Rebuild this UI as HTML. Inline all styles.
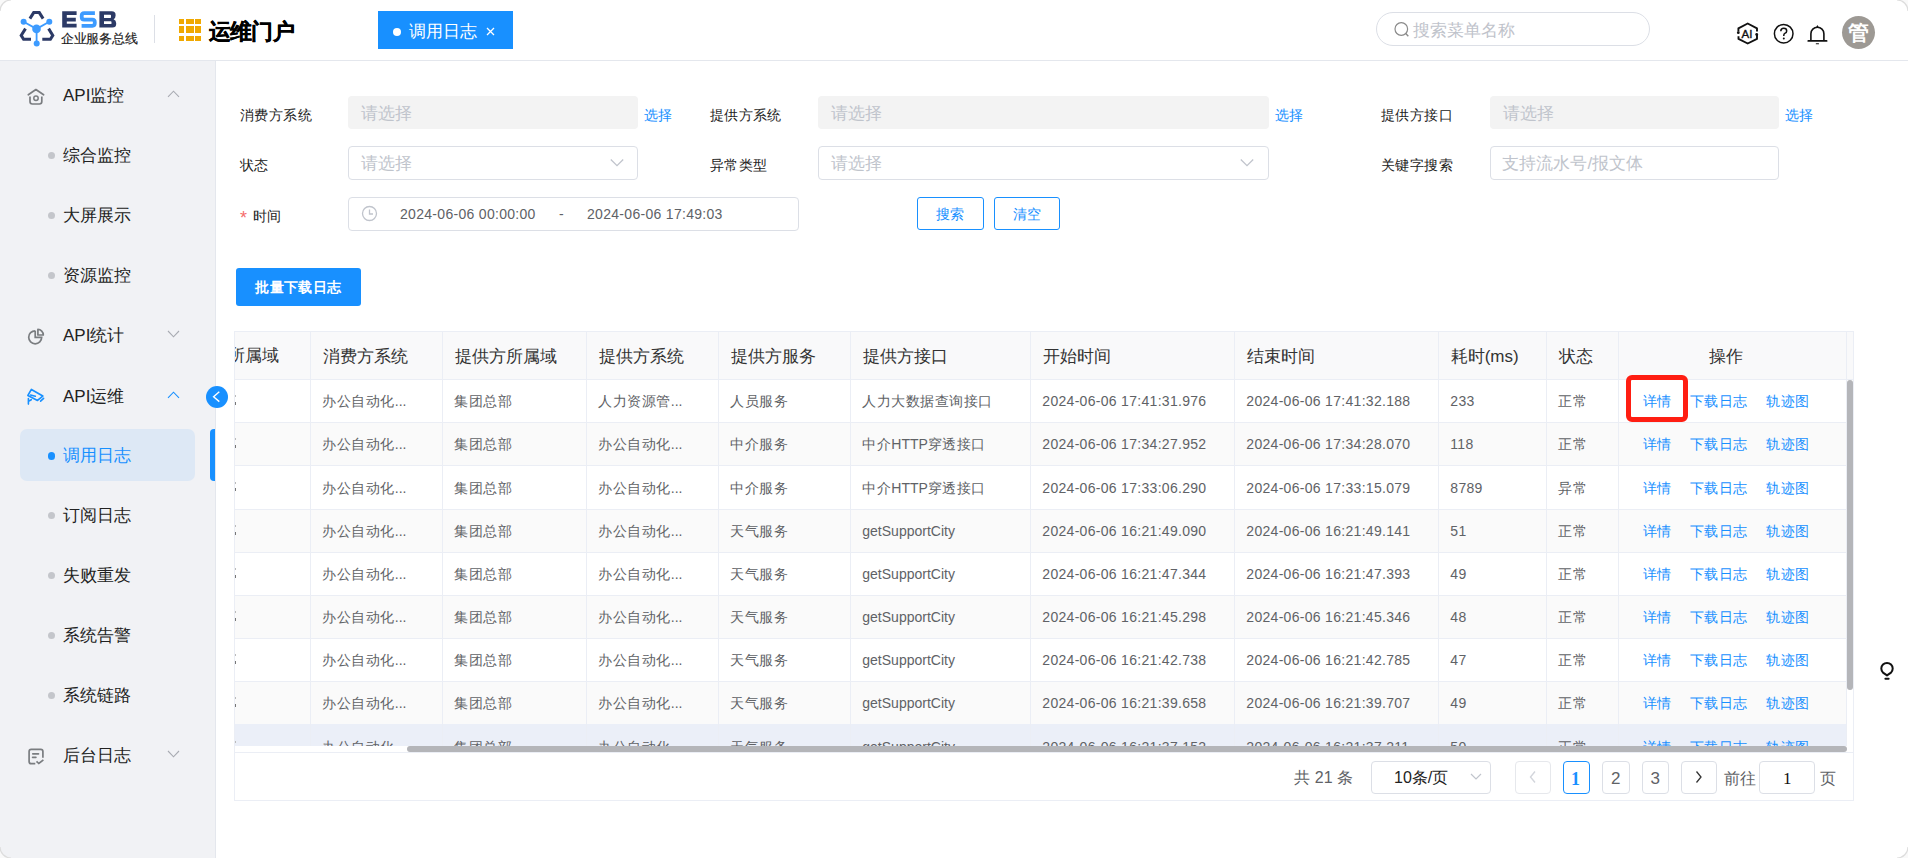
<!DOCTYPE html><html><head><meta charset="utf-8"><title>ESB</title><style>
*{box-sizing:border-box;margin:0;padding:0}
html,body{width:1908px;height:858px;overflow:hidden;background:#fff}
body{position:relative;font-family:"Liberation Sans",sans-serif;color:#303133}
.a{position:absolute;white-space:nowrap}
.t{position:absolute;white-space:nowrap;line-height:20px;height:20px}
</style></head><body>
<div class="a" style="left:0;top:0;width:1908px;height:61px;border-bottom:1px solid #e4e7ed;background:#fff"></div>
<svg class="a" style="left:0;top:0" width="140" height="60" viewBox="0 0 140 60">
<g fill="none" stroke="#2c3a66" stroke-width="3" stroke-linejoin="miter">
<polyline points="29.9,18.6 33.7,12.6 39.3,12.6 43.1,18.6"/>
<polyline points="25.5,28.6 21.2,35.4 23.6,39.2 31,39.2"/>
<polyline points="48.6,28.6 52.8,35.4 50.4,39.2 42.3,39.2"/>
</g>
<g stroke="#3d9bff" stroke-width="1.8" fill="#3d9bff">
<line x1="23.6" y1="21.8" x2="36.5" y2="28.9"/><line x1="49.3" y1="21.8" x2="36.5" y2="28.9"/><line x1="36.6" y1="28.9" x2="36.6" y2="43.5"/>
<circle cx="36.5" cy="28.9" r="4.3" stroke="none"/><circle cx="23.6" cy="21.8" r="3" stroke="none"/><circle cx="49.3" cy="21.8" r="3" stroke="none"/><circle cx="36.7" cy="43.4" r="3" stroke="none"/>
</g>
<g fill="#2c3a66">
<path d="M62.2 11.2H76.6V15H66.8V17.8H75.8V21.4H66.8V23.8H76.6V27.6H62.2Z"/>
<path fill-rule="evenodd" d="M99.4 11.2H111.8Q115.6 11.2 115.6 14.9V15.6Q115.6 18.4 113.6 19.3Q116.2 20.2 116.2 23.2V24Q116.2 27.6 112.4 27.6H99.4ZM104 14.8V17.9H110.3Q111 17.9 111 17.2V15.5Q111 14.8 110.3 14.8ZM104 21.3V24.1H110.8Q111.5 24.1 111.5 23.4V22Q111.5 21.3 110.8 21.3Z"/>
</g>
<path d="M94.9 13.1H84.2Q81.7 13.1 81.7 15.7V17Q81.7 19.6 84.2 19.6H92.4Q94.8 19.6 94.8 22.2V23.1Q94.8 25.8 92.4 25.8H81.6" fill="none" stroke="#3d9bff" stroke-width="3.8"/>
</svg>
<div class="t" style="left:61px;top:29px;font-size:13px;color:#1a1a1a;letter-spacing:-0.3px;-webkit-text-stroke:0.15px #1a1a1a">企业服务总线</div>
<div class="a" style="left:154px;top:15px;width:1px;height:28px;background:#dcdfe6"></div>
<div class="a" style="left:179px;top:18.9px;width:5.3px;height:5.1px;background:#f0a800"></div>
<div class="a" style="left:179px;top:26.4px;width:5.3px;height:7.1px;background:#f0a800"></div>
<div class="a" style="left:179px;top:35.7px;width:5.3px;height:5.1px;background:#f0a800"></div>
<div class="a" style="left:186.2px;top:18.9px;width:7.6px;height:5.1px;background:#f0a800"></div>
<div class="a" style="left:186.2px;top:26.4px;width:7.6px;height:7.1px;background:#f0a800"></div>
<div class="a" style="left:186.2px;top:35.7px;width:7.6px;height:5.1px;background:#f0a800"></div>
<div class="a" style="left:195.4px;top:18.9px;width:5.4px;height:5.1px;background:#f0a800"></div>
<div class="a" style="left:195.4px;top:26.4px;width:5.4px;height:7.1px;background:#f0a800"></div>
<div class="a" style="left:195.4px;top:35.7px;width:5.4px;height:5.1px;background:#f0a800"></div>
<div class="t" style="left:208.5px;top:21.9px;font-size:22px;color:#000;font-weight:bold;letter-spacing:-0.6px;-webkit-text-stroke:0.3px #000">运维门户</div>
<div class="a" style="left:378px;top:11px;width:135px;height:38px;background:#1890ff"></div>
<div class="a" style="left:393px;top:28px;width:8px;height:8px;border-radius:50%;background:#fff"></div>
<div class="t" style="left:408.5px;top:21px;font-size:16.5px;color:#fff;">调用日志</div>
<svg class="a" style="left:486px;top:27px" width="9" height="9" viewBox="0 0 9 9"><path d="M1 1L8 8M8 1L1 8" stroke="#fff" stroke-width="1.3"/></svg>
<div class="a" style="left:1376px;top:12px;width:274px;height:34px;border:1px solid #dcdfe6;border-radius:17px"></div>
<svg class="a" style="left:1393px;top:21px" width="18" height="18" viewBox="0 0 18 18"><circle cx="8.3" cy="8" r="6.3" fill="none" stroke="#8a8a8a" stroke-width="1.2"/><path d="M12.8 12.6L15.3 15.2" stroke="#8a8a8a" stroke-width="1.4"/></svg>
<div class="t" style="left:1412.5px;top:20.8px;font-size:17px;color:#bfc3cb;">搜索菜单名称</div>
<svg class="a" style="left:1732px;top:18px" width="32" height="32" viewBox="0 0 32 32">
<path d="M6.4 13.4V10.4L15.7 5.5L25 10.4V13.4M6.5 18.3V20.9L15.7 25.5L25 20.9V16.8" fill="none" stroke="#111" stroke-width="1.9" stroke-linejoin="round"/>
<circle cx="6.3" cy="14.7" r="1.4" fill="#111"/><circle cx="24.7" cy="16.5" r="1.4" fill="#111"/>
<text x="15" y="19.6" text-anchor="middle" font-family="Liberation Sans" font-size="11.5" fill="#111" stroke="#111" stroke-width="0.35">AI</text>
</svg>
<svg class="a" style="left:1772px;top:22px" width="24" height="24" viewBox="0 0 24 24">
<circle cx="11.7" cy="11.7" r="9.3" fill="none" stroke="#111" stroke-width="1.5"/>
<path d="M8.8 9.2Q8.8 6.3 11.8 6.3Q14.7 6.3 14.7 8.9Q14.7 10.6 12.8 11.4Q11.8 11.9 11.8 13.2V14" fill="none" stroke="#111" stroke-width="1.5"/>
<circle cx="11.8" cy="16.6" r="1" fill="#111"/></svg>
<svg class="a" style="left:1806px;top:22px" width="24" height="24" viewBox="0 0 24 24">
<path d="M4.9 18.8V11.7A6.5 6.5 0 0 1 17.9 11.7V18.8" fill="none" stroke="#111" stroke-width="1.6"/>
<path d="M10.1 5.3L11.4 3L12.7 5.3Z" fill="#111"/>
<path d="M2.3 18.9H20.6" stroke="#111" stroke-width="1.8" stroke-linecap="round"/>
<path d="M10.3 21.8H12.5" stroke="#111" stroke-width="1.1" stroke-linecap="round"/>
</svg>
<div class="a" style="left:1842px;top:16px;width:33px;height:33px;border-radius:50%;background:#9d9994"></div>
<div class="t" style="left:1848px;top:22.5px;font-size:21px;color:#fff;font-weight:bold">管</div>
<div class="a" style="left:0;top:61px;width:216px;height:797px;background:#f1f2f5;border-right:1px solid #e4e7ed"></div>
<div class="a" style="left:20px;top:429px;width:175px;height:52px;background:#dde8f5;border-radius:7px"></div>
<div class="a" style="left:210px;top:429px;width:5px;height:52px;background:#1890ff;border-radius:4px 0 0 4px"></div>
<div class="t" style="left:63px;top:85.8px;font-size:17px;color:#222;">API监控</div>
<svg class="a" style="left:166px;top:87.8px" width="16" height="12" viewBox="0 0 16 12"><path d="M2 8.8L7.5 3.2L13 8.8" fill="none" stroke="#a8abb2" stroke-width="1.1"/></svg>
<div class="t" style="left:63px;top:145.7px;font-size:17px;color:#222;">综合监控</div>
<div class="a" style="left:47.8px;top:152.1px;width:7.2px;height:7.2px;border-radius:50%;background:#c4c6cb"></div>
<div class="t" style="left:63px;top:205.7px;font-size:17px;color:#222;">大屏展示</div>
<div class="a" style="left:47.8px;top:212.1px;width:7.2px;height:7.2px;border-radius:50%;background:#c4c6cb"></div>
<div class="t" style="left:63px;top:265.7px;font-size:17px;color:#222;">资源监控</div>
<div class="a" style="left:47.8px;top:272.09999999999997px;width:7.2px;height:7.2px;border-radius:50%;background:#c4c6cb"></div>
<div class="t" style="left:63px;top:325.8px;font-size:17px;color:#222;">API统计</div>
<svg class="a" style="left:166px;top:327.8px" width="16" height="12" viewBox="0 0 16 12"><path d="M2 3L7.5 8.8L13 3" fill="none" stroke="#a8abb2" stroke-width="1.1"/></svg>
<div class="t" style="left:63px;top:386.6px;font-size:17px;color:#222;">API运维</div>
<svg class="a" style="left:166px;top:388.6px" width="16" height="12" viewBox="0 0 16 12"><path d="M2 8.8L7.5 3.2L13 8.8" fill="none" stroke="#1890ff" stroke-width="1.1"/></svg>
<div class="t" style="left:63px;top:446px;font-size:17px;color:#1890ff;">调用日志</div>
<div class="a" style="left:47.8px;top:452.4px;width:7.2px;height:7.2px;border-radius:50%;background:#1890ff"></div>
<div class="t" style="left:63px;top:505.70000000000005px;font-size:17px;color:#222;">订阅日志</div>
<div class="a" style="left:47.8px;top:512.1px;width:7.2px;height:7.2px;border-radius:50%;background:#c4c6cb"></div>
<div class="t" style="left:63px;top:565.7px;font-size:17px;color:#222;">失败重发</div>
<div class="a" style="left:47.8px;top:572.1px;width:7.2px;height:7.2px;border-radius:50%;background:#c4c6cb"></div>
<div class="t" style="left:63px;top:625.7px;font-size:17px;color:#222;">系统告警</div>
<div class="a" style="left:47.8px;top:632.1px;width:7.2px;height:7.2px;border-radius:50%;background:#c4c6cb"></div>
<div class="t" style="left:63px;top:685.7px;font-size:17px;color:#222;">系统链路</div>
<div class="a" style="left:47.8px;top:692.1px;width:7.2px;height:7.2px;border-radius:50%;background:#c4c6cb"></div>
<div class="t" style="left:63px;top:745.8px;font-size:17px;color:#222;">后台日志</div>
<svg class="a" style="left:166px;top:747.8px" width="16" height="12" viewBox="0 0 16 12"><path d="M2 3L7.5 8.8L13 3" fill="none" stroke="#a8abb2" stroke-width="1.1"/></svg>
<svg class="a" style="left:22px;top:84px" width="28" height="26" viewBox="0 0 28 26">
<path d="M6.3 10.8L13.9 5.5L21.6 10.8" fill="none" stroke="#7a7d80" stroke-width="1.7" stroke-linecap="round" stroke-linejoin="round"/>
<path d="M8 12.4V17.6Q8 20 10.4 20H17.4Q19.8 20 19.8 17.6V12.4" fill="none" stroke="#7a7d80" stroke-width="1.7"/>
<circle cx="14" cy="14.2" r="2.2" fill="none" stroke="#7a7d80" stroke-width="1.5"/></svg>
<svg class="a" style="left:22px;top:322px" width="28" height="26" viewBox="0 0 28 26">
<path d="M13.2 8.8V15.3H19.7A6.5 6.5 0 1 1 13.2 8.8" fill="none" stroke="#7a7d80" stroke-width="1.7"/>
<path d="M15.9 7.4V13H21.3A5.5 5.6 0 0 0 15.9 7.4Z" fill="none" stroke="#7a7d80" stroke-width="1.7" stroke-linejoin="round"/></svg>
<svg class="a" style="left:22px;top:742px" width="28" height="26" viewBox="0 0 28 26">
<path d="M13.3 21.7H9.2Q7.1 21.7 7.1 19.6V9.4Q7.1 7.3 9.2 7.3H18.8Q20.9 7.3 20.9 9.4V15.8" fill="none" stroke="#7a7d80" stroke-width="1.7"/>
<path d="M10.8 11.8H16.5M10.6 15.3H13.9" stroke="#7a7d80" stroke-width="1.7" stroke-linecap="round"/>
<path d="M14.5 19.3L16.8 21.5L21.4 17.9" fill="none" stroke="#7a7d80" stroke-width="1.7"/></svg>
<svg class="a" style="left:22px;top:384px" width="28" height="26" viewBox="0 0 28 26">
<path d="M9.4 5.4L20.8 12.1L15.5 16.4L5.9 11.4Z" fill="none" stroke="#1890ff" stroke-width="1.7" stroke-linejoin="round"/>
<path d="M8.6 11L13.3 12.3M18.6 17.2L21.6 14.3" stroke="#1890ff" stroke-width="1.6" stroke-linecap="round"/>
<path d="M6.4 14.6V20.1M6.5 17.3L9.3 15.7" stroke="#1890ff" stroke-width="1.6" stroke-linecap="round"/></svg>
<svg class="a" style="left:206px;top:386px" width="22" height="22" viewBox="0 0 22 22"><circle cx="11" cy="11" r="11" fill="#1890ff"/><path d="M13.3 5.8L7.6 10.7L13.3 15.6" fill="none" stroke="#fff" stroke-width="1.4"/></svg>
<div class="t" style="left:240px;top:105.2px;font-size:14px;color:#222;letter-spacing:0.4px">消费方系统</div>
<div class="a" style="left:348px;top:96px;width:290px;height:33px;background:#f3f3f3;border-radius:4px"></div>
<div class="t" style="left:361px;top:104.2px;font-size:17px;color:#c0c4cc;">请选择</div>
<div class="t" style="left:643.5px;top:105px;font-size:14px;color:#1890ff;">选择</div>
<div class="t" style="left:709.8px;top:105.3px;font-size:14px;color:#222;letter-spacing:0.4px">提供方系统</div>
<div class="a" style="left:818px;top:96px;width:451px;height:33px;background:#f3f3f3;border-radius:4px"></div>
<div class="t" style="left:831px;top:104.2px;font-size:17px;color:#c0c4cc;">请选择</div>
<div class="t" style="left:1275px;top:105px;font-size:14px;color:#1890ff;">选择</div>
<div class="t" style="left:1381px;top:105px;font-size:14px;color:#222;letter-spacing:0.4px">提供方接口</div>
<div class="a" style="left:1490px;top:96px;width:289px;height:33px;background:#f3f3f3;border-radius:4px"></div>
<div class="t" style="left:1503px;top:104.2px;font-size:17px;color:#c0c4cc;">请选择</div>
<div class="t" style="left:1785.3px;top:105px;font-size:14px;color:#1890ff;">选择</div>
<div class="t" style="left:240px;top:154.9px;font-size:14px;color:#222;letter-spacing:0.4px">状态</div>
<div class="a" style="left:348px;top:146px;width:290px;height:34px;background:#fff;border:1px solid #dcdfe6;border-radius:4px"></div>
<div class="t" style="left:361px;top:154px;font-size:17px;color:#c0c4cc;">请选择</div>
<svg class="a" style="left:609px;top:157px" width="16" height="12" viewBox="0 0 16 12"><path d="M1.8 2.5L8 8.7L14.2 2.5" fill="none" stroke="#c0c4cc" stroke-width="1.3"/></svg>
<div class="t" style="left:709.8px;top:155.3px;font-size:14px;color:#222;letter-spacing:0.4px">异常类型</div>
<div class="a" style="left:818px;top:146px;width:451px;height:34px;background:#fff;border:1px solid #dcdfe6;border-radius:4px"></div>
<div class="t" style="left:831px;top:154px;font-size:17px;color:#c0c4cc;">请选择</div>
<svg class="a" style="left:1239px;top:157px" width="16" height="12" viewBox="0 0 16 12"><path d="M1.8 2.5L8 8.7L14.2 2.5" fill="none" stroke="#c0c4cc" stroke-width="1.3"/></svg>
<div class="t" style="left:1381px;top:155.2px;font-size:14px;color:#222;letter-spacing:0.4px">关键字搜索</div>
<div class="a" style="left:1490px;top:146px;width:289px;height:34px;background:#fff;border:1px solid #dcdfe6;border-radius:4px"></div>
<div class="t" style="left:1502.4px;top:154px;font-size:17px;color:#c0c4cc;">支持流水号/报文体</div>
<div class="t" style="left:240px;top:208px;font-size:18px;color:#303133;"><span style="color:#f56c6c">*</span></div>
<div class="t" style="left:252.7px;top:205.9px;font-size:14px;color:#222;letter-spacing:0.4px">时间</div>
<div class="a" style="left:348px;top:197px;width:451px;height:34px;background:#fff;border:1px solid #dcdfe6;border-radius:4px"></div>
<svg class="a" style="left:361px;top:205px" width="17" height="17" viewBox="0 0 17 17"><circle cx="8.5" cy="8.5" r="7" fill="none" stroke="#c0c4cc" stroke-width="1.3"/><path d="M8.5 4.5V9H12" fill="none" stroke="#c0c4cc" stroke-width="1.3"/></svg>
<div class="t" style="left:400px;top:203.8px;font-size:14px;color:#606266;letter-spacing:0.3px">2024-06-06 00:00:00</div>
<div class="t" style="left:559px;top:203.8px;font-size:14px;color:#606266;">-</div>
<div class="t" style="left:587px;top:203.8px;font-size:14px;color:#606266;letter-spacing:0.3px">2024-06-06 17:49:03</div>
<div class="a" style="left:917px;top:197px;width:67px;height:33px;border:1px solid #1890ff;border-radius:3px;background:#fff"></div>
<div class="t" style="left:936px;top:203.5px;font-size:14px;color:#1890ff;">搜索</div>
<div class="a" style="left:994px;top:197px;width:66px;height:33px;border:1px solid #1890ff;border-radius:3px;background:#fff"></div>
<div class="t" style="left:1012.5px;top:203.5px;font-size:14px;color:#1890ff;">清空</div>
<div class="a" style="left:236px;top:268px;width:125px;height:38px;background:#1890ff;border-radius:3px"></div>
<div class="t" style="left:255.3px;top:277.2px;font-size:14px;color:#fff;font-weight:bold;letter-spacing:0.4px">批量下载日志</div>
<div class="a" style="left:234px;top:331px;width:1620px;height:470px;border:1px solid #ebeef5"></div>
<div class="a" style="left:235px;top:332px;width:1618px;height:47px;background:#f9f9fa"></div>
<div class="a" style="left:235px;top:380px;width:1612px;height:42px;background:#fff"></div>
<div class="a" style="left:235px;top:423px;width:1612px;height:42px;background:#fafafa"></div>
<div class="a" style="left:235px;top:466px;width:1612px;height:43px;background:#fff"></div>
<div class="a" style="left:235px;top:510px;width:1612px;height:42px;background:#fafafa"></div>
<div class="a" style="left:235px;top:553px;width:1612px;height:42px;background:#fff"></div>
<div class="a" style="left:235px;top:596px;width:1612px;height:42px;background:#fafafa"></div>
<div class="a" style="left:235px;top:639px;width:1612px;height:42px;background:#fff"></div>
<div class="a" style="left:235px;top:682px;width:1612px;height:42px;background:#fafafa"></div>
<div class="a" style="left:235px;top:724px;width:1612px;height:22px;background:#ebeff8"></div>
<div class="a" style="left:235px;top:379px;width:1618px;height:1px;background:#ebeef5"></div>
<div class="a" style="left:235px;top:422px;width:1612px;height:1px;background:#ebeef5"></div>
<div class="a" style="left:235px;top:465px;width:1612px;height:1px;background:#ebeef5"></div>
<div class="a" style="left:235px;top:509px;width:1612px;height:1px;background:#ebeef5"></div>
<div class="a" style="left:235px;top:552px;width:1612px;height:1px;background:#ebeef5"></div>
<div class="a" style="left:235px;top:595px;width:1612px;height:1px;background:#ebeef5"></div>
<div class="a" style="left:235px;top:638px;width:1612px;height:1px;background:#ebeef5"></div>
<div class="a" style="left:235px;top:681px;width:1612px;height:1px;background:#ebeef5"></div>
<div class="a" style="left:310px;top:332px;width:1px;height:414px;background:#ebeef5"></div>
<div class="a" style="left:442px;top:332px;width:1px;height:414px;background:#ebeef5"></div>
<div class="a" style="left:586px;top:332px;width:1px;height:414px;background:#ebeef5"></div>
<div class="a" style="left:718px;top:332px;width:1px;height:414px;background:#ebeef5"></div>
<div class="a" style="left:850px;top:332px;width:1px;height:414px;background:#ebeef5"></div>
<div class="a" style="left:1030px;top:332px;width:1px;height:414px;background:#ebeef5"></div>
<div class="a" style="left:1234px;top:332px;width:1px;height:414px;background:#ebeef5"></div>
<div class="a" style="left:1438px;top:332px;width:1px;height:414px;background:#ebeef5"></div>
<div class="a" style="left:1546px;top:332px;width:1px;height:414px;background:#ebeef5"></div>
<div class="a" style="left:1618px;top:332px;width:1px;height:414px;background:#ebeef5"></div>
<div class="a" style="left:1846px;top:332px;width:1px;height:414px;background:#ebeef5"></div>
<div class="a" style="left:235px;top:332px;width:75px;height:46px;overflow:hidden"><div class="t" style="left:-58px;top:14.2px;font-size:17px;color:#333">消费方所属域</div></div>
<div class="t" style="left:322.7px;top:346.5px;font-size:17px;color:#333;">消费方系统</div>
<div class="t" style="left:454.7px;top:346.5px;font-size:17px;color:#333;">提供方所属域</div>
<div class="t" style="left:598.7px;top:346.5px;font-size:17px;color:#333;">提供方系统</div>
<div class="t" style="left:730.7px;top:346.5px;font-size:17px;color:#333;">提供方服务</div>
<div class="t" style="left:862.7px;top:346.5px;font-size:17px;color:#333;">提供方接口</div>
<div class="t" style="left:1042.7px;top:346.5px;font-size:17px;color:#333;">开始时间</div>
<div class="t" style="left:1246.7px;top:346.5px;font-size:17px;color:#333;">结束时间</div>
<div class="t" style="left:1450.7px;top:346.5px;font-size:17px;color:#333;">耗时(ms)</div>
<div class="t" style="left:1558.7px;top:346.5px;font-size:17px;color:#333;">状态</div>
<div class="t" style="left:1709.4px;top:346.5px;font-size:17px;color:#333;">操作</div>
<div class="t" style="left:322.3px;top:391.0px;font-size:14px;color:#606266;"><span style="letter-spacing:0.5px">办公自动化</span><span style="letter-spacing:0px">...</span></div>
<div class="t" style="left:454.3px;top:391.0px;font-size:14px;color:#606266;"><span style="letter-spacing:0.5px">集团总部</span></div>
<div class="t" style="left:598.3px;top:391.0px;font-size:14px;color:#606266;"><span style="letter-spacing:0.5px">人力资源管</span><span style="letter-spacing:0px">...</span></div>
<div class="t" style="left:730.3px;top:391.0px;font-size:14px;color:#606266;"><span style="letter-spacing:0.5px">人员服务</span></div>
<div class="t" style="left:862.3px;top:391.0px;font-size:14px;color:#606266;"><span style="letter-spacing:0.5px">人力大数据查询接口</span></div>
<div class="t" style="left:1042.3px;top:391.0px;font-size:14px;color:#606266;"><span style="letter-spacing:0.3px">2024-06-06 17:41:31.976</span></div>
<div class="t" style="left:1246.3px;top:391.0px;font-size:14px;color:#606266;"><span style="letter-spacing:0.3px">2024-06-06 17:41:32.188</span></div>
<div class="t" style="left:1450.3px;top:391.0px;font-size:14px;color:#606266;"><span style="letter-spacing:0.3px">233</span></div>
<div class="t" style="left:1558.3px;top:391.0px;font-size:14px;color:#606266;"><span style="letter-spacing:0.5px">正常</span></div>
<div class="t" style="left:1642.9px;top:391.0px;font-size:14px;color:#1890ff;"><span style="letter-spacing:0.5px">详情</span></div>
<div class="t" style="left:1689.9px;top:391.0px;font-size:14px;color:#1890ff;"><span style="letter-spacing:0.5px">下载日志</span></div>
<div class="t" style="left:1766.2px;top:391.0px;font-size:14px;color:#1890ff;"><span style="letter-spacing:0.5px">轨迹图</span></div>
<div class="t" style="left:322.3px;top:434.0px;font-size:14px;color:#606266;"><span style="letter-spacing:0.5px">办公自动化</span><span style="letter-spacing:0px">...</span></div>
<div class="t" style="left:454.3px;top:434.0px;font-size:14px;color:#606266;"><span style="letter-spacing:0.5px">集团总部</span></div>
<div class="t" style="left:598.3px;top:434.0px;font-size:14px;color:#606266;"><span style="letter-spacing:0.5px">办公自动化</span><span style="letter-spacing:0px">...</span></div>
<div class="t" style="left:730.3px;top:434.0px;font-size:14px;color:#606266;"><span style="letter-spacing:0.5px">中介服务</span></div>
<div class="t" style="left:862.3px;top:434.0px;font-size:14px;color:#606266;"><span style="letter-spacing:0.5px">中介</span><span style="letter-spacing:0px">HTTP</span><span style="letter-spacing:0.5px">穿透接口</span></div>
<div class="t" style="left:1042.3px;top:434.0px;font-size:14px;color:#606266;"><span style="letter-spacing:0.3px">2024-06-06 17:34:27.952</span></div>
<div class="t" style="left:1246.3px;top:434.0px;font-size:14px;color:#606266;"><span style="letter-spacing:0.3px">2024-06-06 17:34:28.070</span></div>
<div class="t" style="left:1450.3px;top:434.0px;font-size:14px;color:#606266;"><span style="letter-spacing:0.3px">118</span></div>
<div class="t" style="left:1558.3px;top:434.0px;font-size:14px;color:#606266;"><span style="letter-spacing:0.5px">正常</span></div>
<div class="t" style="left:1642.9px;top:434.0px;font-size:14px;color:#1890ff;"><span style="letter-spacing:0.5px">详情</span></div>
<div class="t" style="left:1689.9px;top:434.0px;font-size:14px;color:#1890ff;"><span style="letter-spacing:0.5px">下载日志</span></div>
<div class="t" style="left:1766.2px;top:434.0px;font-size:14px;color:#1890ff;"><span style="letter-spacing:0.5px">轨迹图</span></div>
<div class="t" style="left:322.3px;top:477.5px;font-size:14px;color:#606266;"><span style="letter-spacing:0.5px">办公自动化</span><span style="letter-spacing:0px">...</span></div>
<div class="t" style="left:454.3px;top:477.5px;font-size:14px;color:#606266;"><span style="letter-spacing:0.5px">集团总部</span></div>
<div class="t" style="left:598.3px;top:477.5px;font-size:14px;color:#606266;"><span style="letter-spacing:0.5px">办公自动化</span><span style="letter-spacing:0px">...</span></div>
<div class="t" style="left:730.3px;top:477.5px;font-size:14px;color:#606266;"><span style="letter-spacing:0.5px">中介服务</span></div>
<div class="t" style="left:862.3px;top:477.5px;font-size:14px;color:#606266;"><span style="letter-spacing:0.5px">中介</span><span style="letter-spacing:0px">HTTP</span><span style="letter-spacing:0.5px">穿透接口</span></div>
<div class="t" style="left:1042.3px;top:477.5px;font-size:14px;color:#606266;"><span style="letter-spacing:0.3px">2024-06-06 17:33:06.290</span></div>
<div class="t" style="left:1246.3px;top:477.5px;font-size:14px;color:#606266;"><span style="letter-spacing:0.3px">2024-06-06 17:33:15.079</span></div>
<div class="t" style="left:1450.3px;top:477.5px;font-size:14px;color:#606266;"><span style="letter-spacing:0.3px">8789</span></div>
<div class="t" style="left:1558.3px;top:477.5px;font-size:14px;color:#606266;"><span style="letter-spacing:0.5px">异常</span></div>
<div class="t" style="left:1642.9px;top:477.5px;font-size:14px;color:#1890ff;"><span style="letter-spacing:0.5px">详情</span></div>
<div class="t" style="left:1689.9px;top:477.5px;font-size:14px;color:#1890ff;"><span style="letter-spacing:0.5px">下载日志</span></div>
<div class="t" style="left:1766.2px;top:477.5px;font-size:14px;color:#1890ff;"><span style="letter-spacing:0.5px">轨迹图</span></div>
<div class="t" style="left:322.3px;top:521.0px;font-size:14px;color:#606266;"><span style="letter-spacing:0.5px">办公自动化</span><span style="letter-spacing:0px">...</span></div>
<div class="t" style="left:454.3px;top:521.0px;font-size:14px;color:#606266;"><span style="letter-spacing:0.5px">集团总部</span></div>
<div class="t" style="left:598.3px;top:521.0px;font-size:14px;color:#606266;"><span style="letter-spacing:0.5px">办公自动化</span><span style="letter-spacing:0px">...</span></div>
<div class="t" style="left:730.3px;top:521.0px;font-size:14px;color:#606266;"><span style="letter-spacing:0.5px">天气服务</span></div>
<div class="t" style="left:862.3px;top:521.0px;font-size:14px;color:#606266;"><span style="letter-spacing:0px">getSupportCity</span></div>
<div class="t" style="left:1042.3px;top:521.0px;font-size:14px;color:#606266;"><span style="letter-spacing:0.3px">2024-06-06 16:21:49.090</span></div>
<div class="t" style="left:1246.3px;top:521.0px;font-size:14px;color:#606266;"><span style="letter-spacing:0.3px">2024-06-06 16:21:49.141</span></div>
<div class="t" style="left:1450.3px;top:521.0px;font-size:14px;color:#606266;"><span style="letter-spacing:0.3px">51</span></div>
<div class="t" style="left:1558.3px;top:521.0px;font-size:14px;color:#606266;"><span style="letter-spacing:0.5px">正常</span></div>
<div class="t" style="left:1642.9px;top:521.0px;font-size:14px;color:#1890ff;"><span style="letter-spacing:0.5px">详情</span></div>
<div class="t" style="left:1689.9px;top:521.0px;font-size:14px;color:#1890ff;"><span style="letter-spacing:0.5px">下载日志</span></div>
<div class="t" style="left:1766.2px;top:521.0px;font-size:14px;color:#1890ff;"><span style="letter-spacing:0.5px">轨迹图</span></div>
<div class="t" style="left:322.3px;top:564.0px;font-size:14px;color:#606266;"><span style="letter-spacing:0.5px">办公自动化</span><span style="letter-spacing:0px">...</span></div>
<div class="t" style="left:454.3px;top:564.0px;font-size:14px;color:#606266;"><span style="letter-spacing:0.5px">集团总部</span></div>
<div class="t" style="left:598.3px;top:564.0px;font-size:14px;color:#606266;"><span style="letter-spacing:0.5px">办公自动化</span><span style="letter-spacing:0px">...</span></div>
<div class="t" style="left:730.3px;top:564.0px;font-size:14px;color:#606266;"><span style="letter-spacing:0.5px">天气服务</span></div>
<div class="t" style="left:862.3px;top:564.0px;font-size:14px;color:#606266;"><span style="letter-spacing:0px">getSupportCity</span></div>
<div class="t" style="left:1042.3px;top:564.0px;font-size:14px;color:#606266;"><span style="letter-spacing:0.3px">2024-06-06 16:21:47.344</span></div>
<div class="t" style="left:1246.3px;top:564.0px;font-size:14px;color:#606266;"><span style="letter-spacing:0.3px">2024-06-06 16:21:47.393</span></div>
<div class="t" style="left:1450.3px;top:564.0px;font-size:14px;color:#606266;"><span style="letter-spacing:0.3px">49</span></div>
<div class="t" style="left:1558.3px;top:564.0px;font-size:14px;color:#606266;"><span style="letter-spacing:0.5px">正常</span></div>
<div class="t" style="left:1642.9px;top:564.0px;font-size:14px;color:#1890ff;"><span style="letter-spacing:0.5px">详情</span></div>
<div class="t" style="left:1689.9px;top:564.0px;font-size:14px;color:#1890ff;"><span style="letter-spacing:0.5px">下载日志</span></div>
<div class="t" style="left:1766.2px;top:564.0px;font-size:14px;color:#1890ff;"><span style="letter-spacing:0.5px">轨迹图</span></div>
<div class="t" style="left:322.3px;top:607.0px;font-size:14px;color:#606266;"><span style="letter-spacing:0.5px">办公自动化</span><span style="letter-spacing:0px">...</span></div>
<div class="t" style="left:454.3px;top:607.0px;font-size:14px;color:#606266;"><span style="letter-spacing:0.5px">集团总部</span></div>
<div class="t" style="left:598.3px;top:607.0px;font-size:14px;color:#606266;"><span style="letter-spacing:0.5px">办公自动化</span><span style="letter-spacing:0px">...</span></div>
<div class="t" style="left:730.3px;top:607.0px;font-size:14px;color:#606266;"><span style="letter-spacing:0.5px">天气服务</span></div>
<div class="t" style="left:862.3px;top:607.0px;font-size:14px;color:#606266;"><span style="letter-spacing:0px">getSupportCity</span></div>
<div class="t" style="left:1042.3px;top:607.0px;font-size:14px;color:#606266;"><span style="letter-spacing:0.3px">2024-06-06 16:21:45.298</span></div>
<div class="t" style="left:1246.3px;top:607.0px;font-size:14px;color:#606266;"><span style="letter-spacing:0.3px">2024-06-06 16:21:45.346</span></div>
<div class="t" style="left:1450.3px;top:607.0px;font-size:14px;color:#606266;"><span style="letter-spacing:0.3px">48</span></div>
<div class="t" style="left:1558.3px;top:607.0px;font-size:14px;color:#606266;"><span style="letter-spacing:0.5px">正常</span></div>
<div class="t" style="left:1642.9px;top:607.0px;font-size:14px;color:#1890ff;"><span style="letter-spacing:0.5px">详情</span></div>
<div class="t" style="left:1689.9px;top:607.0px;font-size:14px;color:#1890ff;"><span style="letter-spacing:0.5px">下载日志</span></div>
<div class="t" style="left:1766.2px;top:607.0px;font-size:14px;color:#1890ff;"><span style="letter-spacing:0.5px">轨迹图</span></div>
<div class="t" style="left:322.3px;top:650.0px;font-size:14px;color:#606266;"><span style="letter-spacing:0.5px">办公自动化</span><span style="letter-spacing:0px">...</span></div>
<div class="t" style="left:454.3px;top:650.0px;font-size:14px;color:#606266;"><span style="letter-spacing:0.5px">集团总部</span></div>
<div class="t" style="left:598.3px;top:650.0px;font-size:14px;color:#606266;"><span style="letter-spacing:0.5px">办公自动化</span><span style="letter-spacing:0px">...</span></div>
<div class="t" style="left:730.3px;top:650.0px;font-size:14px;color:#606266;"><span style="letter-spacing:0.5px">天气服务</span></div>
<div class="t" style="left:862.3px;top:650.0px;font-size:14px;color:#606266;"><span style="letter-spacing:0px">getSupportCity</span></div>
<div class="t" style="left:1042.3px;top:650.0px;font-size:14px;color:#606266;"><span style="letter-spacing:0.3px">2024-06-06 16:21:42.738</span></div>
<div class="t" style="left:1246.3px;top:650.0px;font-size:14px;color:#606266;"><span style="letter-spacing:0.3px">2024-06-06 16:21:42.785</span></div>
<div class="t" style="left:1450.3px;top:650.0px;font-size:14px;color:#606266;"><span style="letter-spacing:0.3px">47</span></div>
<div class="t" style="left:1558.3px;top:650.0px;font-size:14px;color:#606266;"><span style="letter-spacing:0.5px">正常</span></div>
<div class="t" style="left:1642.9px;top:650.0px;font-size:14px;color:#1890ff;"><span style="letter-spacing:0.5px">详情</span></div>
<div class="t" style="left:1689.9px;top:650.0px;font-size:14px;color:#1890ff;"><span style="letter-spacing:0.5px">下载日志</span></div>
<div class="t" style="left:1766.2px;top:650.0px;font-size:14px;color:#1890ff;"><span style="letter-spacing:0.5px">轨迹图</span></div>
<div class="t" style="left:322.3px;top:693.0px;font-size:14px;color:#606266;"><span style="letter-spacing:0.5px">办公自动化</span><span style="letter-spacing:0px">...</span></div>
<div class="t" style="left:454.3px;top:693.0px;font-size:14px;color:#606266;"><span style="letter-spacing:0.5px">集团总部</span></div>
<div class="t" style="left:598.3px;top:693.0px;font-size:14px;color:#606266;"><span style="letter-spacing:0.5px">办公自动化</span><span style="letter-spacing:0px">...</span></div>
<div class="t" style="left:730.3px;top:693.0px;font-size:14px;color:#606266;"><span style="letter-spacing:0.5px">天气服务</span></div>
<div class="t" style="left:862.3px;top:693.0px;font-size:14px;color:#606266;"><span style="letter-spacing:0px">getSupportCity</span></div>
<div class="t" style="left:1042.3px;top:693.0px;font-size:14px;color:#606266;"><span style="letter-spacing:0.3px">2024-06-06 16:21:39.658</span></div>
<div class="t" style="left:1246.3px;top:693.0px;font-size:14px;color:#606266;"><span style="letter-spacing:0.3px">2024-06-06 16:21:39.707</span></div>
<div class="t" style="left:1450.3px;top:693.0px;font-size:14px;color:#606266;"><span style="letter-spacing:0.3px">49</span></div>
<div class="t" style="left:1558.3px;top:693.0px;font-size:14px;color:#606266;"><span style="letter-spacing:0.5px">正常</span></div>
<div class="t" style="left:1642.9px;top:693.0px;font-size:14px;color:#1890ff;"><span style="letter-spacing:0.5px">详情</span></div>
<div class="t" style="left:1689.9px;top:693.0px;font-size:14px;color:#1890ff;"><span style="letter-spacing:0.5px">下载日志</span></div>
<div class="t" style="left:1766.2px;top:693.0px;font-size:14px;color:#1890ff;"><span style="letter-spacing:0.5px">轨迹图</span></div>
<div class="t" style="left:322.3px;top:737.3px;font-size:14px;color:#606266;"><span style="letter-spacing:0.5px">办公自动化</span><span style="letter-spacing:0px">...</span></div>
<div class="t" style="left:454.3px;top:737.3px;font-size:14px;color:#606266;"><span style="letter-spacing:0.5px">集团总部</span></div>
<div class="t" style="left:598.3px;top:737.3px;font-size:14px;color:#606266;"><span style="letter-spacing:0.5px">办公自动化</span><span style="letter-spacing:0px">...</span></div>
<div class="t" style="left:730.3px;top:737.3px;font-size:14px;color:#606266;"><span style="letter-spacing:0.5px">天气服务</span></div>
<div class="t" style="left:862.3px;top:737.3px;font-size:14px;color:#606266;"><span style="letter-spacing:0px">getSupportCity</span></div>
<div class="t" style="left:1042.3px;top:737.3px;font-size:14px;color:#606266;"><span style="letter-spacing:0.3px">2024-06-06 16:21:37.152</span></div>
<div class="t" style="left:1246.3px;top:737.3px;font-size:14px;color:#606266;"><span style="letter-spacing:0.3px">2024-06-06 16:21:37.211</span></div>
<div class="t" style="left:1450.3px;top:737.3px;font-size:14px;color:#606266;"><span style="letter-spacing:0.3px">50</span></div>
<div class="t" style="left:1558.3px;top:737.3px;font-size:14px;color:#606266;"><span style="letter-spacing:0.5px">正常</span></div>
<div class="t" style="left:1642.9px;top:737.3px;font-size:14px;color:#1890ff;"><span style="letter-spacing:0.5px">详情</span></div>
<div class="t" style="left:1689.9px;top:737.3px;font-size:14px;color:#1890ff;"><span style="letter-spacing:0.5px">下载日志</span></div>
<div class="t" style="left:1766.2px;top:737.3px;font-size:14px;color:#1890ff;"><span style="letter-spacing:0.5px">轨迹图</span></div>
<div class="a" style="left:235px;top:395.0px;width:1px;height:2px;background:#bbb"></div>
<div class="a" style="left:235px;top:401.5px;width:1px;height:3px;background:#777"></div>
<div class="a" style="left:235px;top:438.0px;width:1px;height:2px;background:#bbb"></div>
<div class="a" style="left:235px;top:444.5px;width:1px;height:3px;background:#777"></div>
<div class="a" style="left:235px;top:481.5px;width:1px;height:2px;background:#bbb"></div>
<div class="a" style="left:235px;top:488.0px;width:1px;height:3px;background:#777"></div>
<div class="a" style="left:235px;top:525.0px;width:1px;height:2px;background:#bbb"></div>
<div class="a" style="left:235px;top:531.5px;width:1px;height:3px;background:#777"></div>
<div class="a" style="left:235px;top:568.0px;width:1px;height:2px;background:#bbb"></div>
<div class="a" style="left:235px;top:574.5px;width:1px;height:3px;background:#777"></div>
<div class="a" style="left:235px;top:611.0px;width:1px;height:2px;background:#bbb"></div>
<div class="a" style="left:235px;top:617.5px;width:1px;height:3px;background:#777"></div>
<div class="a" style="left:235px;top:654.0px;width:1px;height:2px;background:#bbb"></div>
<div class="a" style="left:235px;top:660.5px;width:1px;height:3px;background:#777"></div>
<div class="a" style="left:235px;top:697.0px;width:1px;height:2px;background:#bbb"></div>
<div class="a" style="left:235px;top:703.5px;width:1px;height:3px;background:#777"></div>
<div class="a" style="left:235px;top:741.3px;width:1px;height:2px;background:#bbb"></div>
<div class="a" style="left:235px;top:747.8px;width:1px;height:3px;background:#777"></div>
<div class="a" style="left:235px;top:746px;width:1618px;height:54px;background:#fff"></div>
<div class="a" style="left:407px;top:746px;width:1440px;height:6px;background:#b4b5b9;border-radius:3px"></div>
<div class="a" style="left:235px;top:752px;width:1618px;height:1px;background:#ebeef5"></div>
<div class="a" style="left:1847px;top:380px;width:6px;height:310px;background:#b4b5b9;border-radius:3px"></div>
<div class="a" style="left:1625.5px;top:375.2px;width:62px;height:47px;border:5px solid #ff1e12;border-radius:6px"></div>
<div class="t" style="left:1294.3px;top:767.7px;font-size:16px;color:#606266;">共 21 条</div>
<div class="a" style="left:1371px;top:761px;width:120px;height:33px;border:1px solid #dcdfe6;border-radius:4px"></div>
<div class="t" style="left:1394px;top:767.7px;font-size:16px;color:#222;">10条/页</div>
<svg class="a" style="left:1469px;top:771px" width="14" height="12" viewBox="0 0 14 12"><path d="M2 3L7 8L12 3" fill="none" stroke="#c0c4cc" stroke-width="1.2"/></svg>
<div class="a" style="left:1515px;top:761px;width:36px;height:33px;border:1px solid #e6e8ec;border-radius:4px;background:#fff"></div>
<svg class="a" style="left:1526px;top:769px" width="14" height="16" viewBox="0 0 14 16"><path d="M9 2.5L4.5 8L9 13.5" fill="none" stroke="#d3d6dc" stroke-width="1.4"/></svg>
<div class="a" style="left:1563px;top:761px;width:27px;height:33px;border:1px solid #1890ff;border-radius:4px;background:#fff"></div>
<div class="t" style="left:1571px;top:768.6px;font-size:18px;color:#1890ff;font-weight:bold;font-family:'Liberation Serif',serif">1</div>
<div class="a" style="left:1602px;top:761px;width:28px;height:33px;border:1px solid #dcdfe6;border-radius:4px;background:#fff"></div>
<div class="t" style="left:1611px;top:768.6px;font-size:17px;color:#606266;">2</div>
<div class="a" style="left:1642px;top:761px;width:27px;height:33px;border:1px solid #dcdfe6;border-radius:4px;background:#fff"></div>
<div class="t" style="left:1650.5px;top:768.6px;font-size:17px;color:#606266;">3</div>
<div class="a" style="left:1681px;top:761px;width:36px;height:33px;border:1px solid #dcdfe6;border-radius:4px;background:#fff"></div>
<svg class="a" style="left:1692px;top:769px" width="14" height="16" viewBox="0 0 14 16"><path d="M4.5 2.5L9 8L4.5 13.5" fill="none" stroke="#333" stroke-width="1.3"/></svg>
<div class="t" style="left:1724px;top:769.3px;font-size:16px;color:#606266;">前往</div>
<div class="a" style="left:1759px;top:761px;width:56px;height:33px;border:1px solid #dcdfe6;border-radius:4px"></div>
<div class="t" style="left:1783px;top:768.8px;font-size:17px;color:#111;font-family:'Liberation Serif',serif">1</div>
<div class="t" style="left:1819.5px;top:769.1px;font-size:16px;color:#606266;">页</div>
<svg class="a" style="left:1872px;top:655px" width="28" height="30" viewBox="0 0 28 30"><path d="M10.97 17.63A5.7 5.7 0 1 1 19.03 17.63L15 20.4Z" fill="none" stroke="#111" stroke-width="2" stroke-linejoin="round"/><path d="M13.4 23.8H16.6" stroke="#111" stroke-width="2" stroke-linecap="round"/></svg>
<svg class="a" style="left:0;top:0" width="12" height="12"><path d="M0 0H11A11 11 0 0 0 0 11Z" fill="#f9f9f9"/><path d="M0 11A11 11 0 0 1 11 0" fill="none" stroke="#dddddd" stroke-width="1.2"/></svg>
<svg class="a" style="left:1896px;top:0" width="12" height="12" viewBox="-1 0 12 12"><path d="M11 0H0A11 11 0 0 1 11 11Z" fill="#f9f9f9"/><path d="M0 0A11 11 0 0 1 11 11" fill="none" stroke="#dddddd" stroke-width="1.2"/></svg>
<svg class="a" style="left:0;top:846px" width="12" height="12" viewBox="0 -1 12 12"><path d="M0 11H11A11 11 0 0 1 0 0Z" fill="#f9f9f9"/><path d="M0 0A11 11 0 0 0 11 11" fill="none" stroke="#dddddd" stroke-width="1.2"/></svg>
<svg class="a" style="left:1896px;top:846px" width="12" height="12" viewBox="-1 -1 12 12"><path d="M11 11H0A11 11 0 0 0 11 0Z" fill="#f9f9f9"/><path d="M11 0A11 11 0 0 1 0 11" fill="none" stroke="#dddddd" stroke-width="1.2"/></svg>
</body></html>
